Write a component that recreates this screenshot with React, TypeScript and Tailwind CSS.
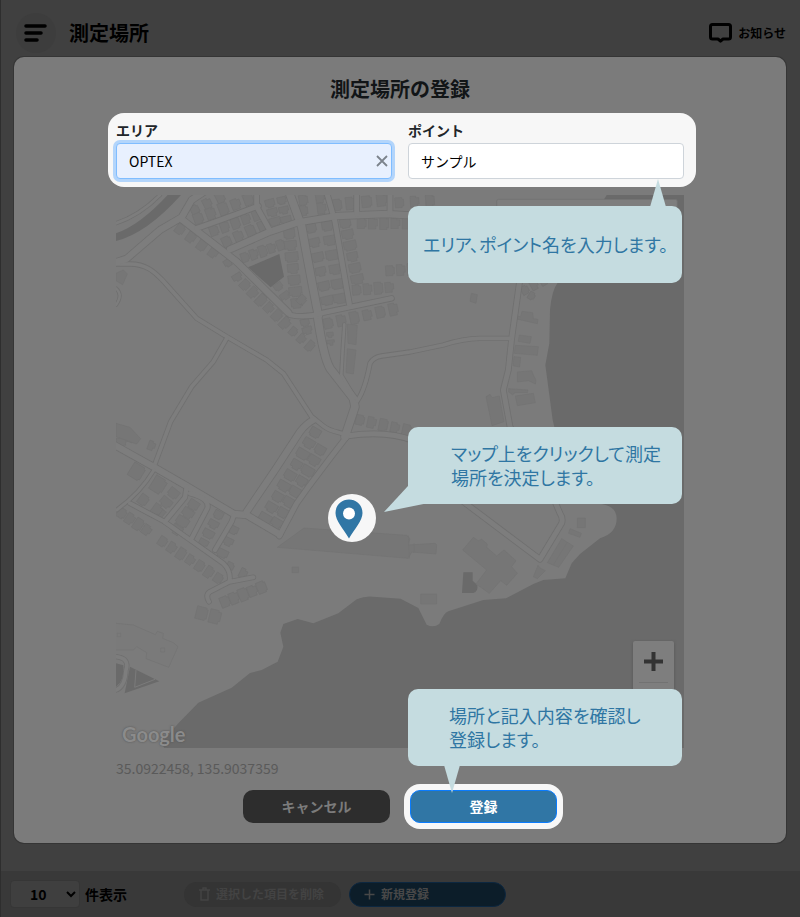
import { useState, type ReactNode } from 'react'

// Map units are a third of a pixel, the map is 1704 x 1659 units
interface Road {
  d: string
  width: number
}

interface HouseRow {
  from: [number, number]
  to: [number, number]
  count: number
  size: number
}

const roads: Road[] = [
  { d: 'M0 222H60C110 222 135 248 155 268L260 385L350 440L470 510L520 550L605 680L640 708C665 728 690 725 710 735', width: 12 },
  { d: 'M350 445L310 515L245 590L182 695L132 830', width: 12 },
  { d: 'M0 758L130 830L230 888L372 972L410 975L508 1033', width: 20 },
  { d: 'M610 690Q590 700 570 725L495 840L410 965', width: 20 },
  { d: 'M508 1038L560 940L590 898L660 805L710 740', width: 16 },
  { d: 'M710 738Q830 720 910 752L980 800L1060 935L1290 1108L1355 1000Q1360 985 1350 970L1335 935L1250 800L1200 710L1180 600L1195 540L1205 445L1235 230', width: 16 },
  { d: 'M705 740L735 650L730 625L660 535Q640 500 622 375', width: 24 },
  { d: 'M625 375Q600 250 575 110L535 0', width: 24 },
  { d: 'M540 375Q590 385 640 368L845 325', width: 15 },
  { d: 'M718 342L675 95L648 0', width: 16 },
  { d: 'M215 88L380 215L535 368', width: 20 },
  { d: 'M0 222L50 206L150 120L215 82L245 30L290 0', width: 20 },
  { d: 'M0 105Q80 85 150 15', width: 9 },
  { d: 'M260 115Q320 95 445 48', width: 16 },
  { d: 'M360 178L480 125L560 98L680 78L830 72L1000 82', width: 20 },
  { d: 'M480 122L440 50V0M740 72V0M840 70V0', width: 16 },
  { d: 'M703 403L698 480L694 555L742 635', width: 9 },
  { d: 'M742 632Q765 600 780 520Q790 502 815 498L900 486L1000 465Q1060 445 1110 445H1200', width: 12 },
  { d: 'M60 940L160 993L340 1120Q365 1145 358 1175L300 1205Q285 1215 297 1235M360 1175L430 1162', width: 13 },
  { d: 'M165 995L225 922L230 890M245 1045L292 955Q300 925 240 910M315 1080L365 995L372 975', width: 14 },
  { d: 'M20 960Q90 910 132 840', width: 10 },
  { d: 'M18 1400Q60 1405 48 1440Q45 1490 18 1500', width: 12 },
  { d: 'M18 295Q40 315 18 345', width: 8 },
]

const houseRows: HouseRow[] = [
  { from: [210, 118], to: [310, 188], count: 4, size: 32 },
  { from: [355, 218], to: [382, 262], count: 2, size: 28 },
  { from: [405, 285], to: [525, 400], count: 6, size: 32 },
  { from: [550, 425], to: [600, 468], count: 3, size: 28 },
  { from: [585, 398], to: [592, 422], count: 2, size: 28 },
  { from: [255, 60], to: [330, 22], count: 3, size: 31 },
  { from: [265, 85], to: [415, 28], count: 5, size: 34 },
  { from: [312, 122], to: [440, 75], count: 5, size: 32 },
  { from: [350, 155], to: [458, 108], count: 4, size: 33 },
  { from: [405, 202], to: [512, 165], count: 5, size: 30 },
  { from: [538, 132], to: [560, 340], count: 7, size: 35 },
  { from: [505, 290], to: [525, 318], count: 2, size: 28 },
  { from: [575, 330], to: [588, 342], count: 1, size: 30 },
  { from: [603, 115], to: [652, 332], count: 6, size: 33 },
  { from: [652, 108], to: [690, 326], count: 6, size: 35 },
  { from: [706, 100], to: [742, 268], count: 6, size: 34 },
  { from: [740, 300], to: [838, 292], count: 4, size: 32 },
  { from: [755, 100], to: [890, 100], count: 5, size: 33 },
  { from: [480, 40], to: [495, 95], count: 3, size: 30 },
  { from: [515, 32], to: [528, 90], count: 3, size: 28 },
  { from: [580, 30], to: [630, 22], count: 2, size: 32 },
  { from: [580, 62], to: [635, 55], count: 2, size: 32 },
  { from: [680, 45], to: [722, 40], count: 2, size: 36 },
  { from: [770, 35], to: [815, 30], count: 2, size: 36 },
  { from: [868, 38], to: [960, 32], count: 3, size: 32 },
  { from: [655, 400], to: [850, 358], count: 6, size: 33 },
  { from: [660, 435], to: [662, 458], count: 2, size: 22 },
  { from: [750, 690], to: [890, 720], count: 5, size: 32 },
  { from: [840, 242], to: [905, 238], count: 3, size: 32 },
  { from: [615, 728], to: [465, 985], count: 9, size: 34 },
  { from: [630, 780], to: [500, 1000], count: 8, size: 34 },
  { from: [65, 745], to: [125, 767], count: 2, size: 27 },
  { from: [80, 845], to: [145, 885], count: 2, size: 46 },
  { from: [190, 910], to: [145, 965], count: 3, size: 34 },
  { from: [100, 930], to: [140, 960], count: 2, size: 34 },
  { from: [250, 945], to: [200, 1020], count: 4, size: 34 },
  { from: [325, 975], to: [280, 1060], count: 4, size: 30 },
  { from: [370, 1020], to: [337, 1090], count: 3, size: 30 },
  { from: [35, 970], to: [110, 1020], count: 4, size: 32 },
  { from: [158, 1055], to: [325, 1165], count: 7, size: 31 },
  { from: [360, 1130], to: [400, 1150], count: 2, size: 28 },
  { from: [345, 1235], to: [455, 1192], count: 5, size: 34 },
  { from: [275, 1270], to: [315, 1280], count: 2, size: 40 },
  { from: [30, 725], to: [35, 755], count: 2, size: 30 },
  { from: [1245, 300], to: [1300, 270], count: 3, size: 28 },
  { from: [1265, 318], to: [1278, 326], count: 1, size: 25 },
]

const buildings = [
  'M712 402L742 406L738 464L714 460Z',
  'M712 476L738 480L730 552L708 548Z',
  'M18 250L40 240L52 252L38 284L18 272Z',
  'M18 700L60 712L92 746L80 762L18 740Z',
  'M1084 310L1102 314L1098 340L1080 334Z',
  'M1218 378L1232 380L1236 364L1268 368L1270 386L1284 388L1282 401L1216 386Z',
  'M1228 435L1264 440L1260 460L1225 454Z',
  'M1216 466L1285 470L1282 496L1213 490Z',
  'M1212 500L1232 502L1229 531L1209 527Z',
  'M1222 546L1265 542L1270 555L1278 570L1276 582L1256 572L1222 576Z',
  'M1196 596L1254 600L1252 608L1215 608L1208 614L1196 606Z',
  'M1216 618L1270 610L1276 638L1222 647Z',
  'M1128 620L1140 613L1146 623L1168 618L1182 695L1146 707Z',
  'M502 1072L582 1014L890 1036L900 1046L895 1065L975 1060L980 1064L978 1092L905 1086L895 1105Z',
  'M895 1036L898 1106M912 1060V1088',
  'M546 1131H566V1148H546Z',
  'M1058 1080L1090 1042L1105 1052L1115 1048L1132 1062L1130 1072L1160 1098L1182 1080L1218 1112L1205 1130L1222 1150L1190 1186L1172 1172L1138 1210L1098 1182L1130 1140Z',
  'M1312 1118L1355 1046L1390 1068L1346 1132ZM1330 1125L1372 1056',
  'M1380 1016L1414 1030L1410 1042L1376 1030Z',
  'M1402 984H1426V1013H1402Z',
  'M1284 1126L1290 1134L1306 1142L1294 1154L1282 1166L1270 1160Z',
  'M932 1212H980V1242H932Z',
]

const school =
  'M18 1300L70 1305L136 1334L142 1324L160 1330L158 1345L190 1358L204 1370L176 1432L108 1406L110 1388L80 1370L70 1380H18M22 1330H32V1340H22ZM152 1374H164V1386H152Z'

function Houses({ from, to, count, size }: HouseRow) {
  const dx = to[0] - from[0]
  const dy = to[1] - from[1]
  const angle = (Math.atan2(dy, dx) * 180) / Math.PI
  return (
    <>
      {Array.from({ length: count }, (_, i) => {
        const t = count > 1 ? i / (count - 1) : 0
        const w = size - 6
        const h = size + (i % 3) * 3 - 2
        const cut = 5 + (i % 2) * 4
        return (
          <path
            key={i}
            transform={`translate(${from[0] + dx * t} ${from[1] + dy * t}) rotate(${angle})`}
            d={`M${-w / 2} ${-h / 2}H${w / 2 - cut}V${-h / 2 + 5}H${w / 2}V${h / 2 - cut}H${w / 2 - 5}V${h / 2}H${-w / 2}Z`}
          />
        )
      })}
    </>
  )
}

function MapDrawing() {
  return (
    <svg className="block w-full h-[553px]" viewBox="18 15 1704 1659" preserveAspectRatio="xMidYMid slice" aria-hidden="true">
      <rect x="18" y="15" width="1704" height="1659" fill="#7b7b7b" />
      <g fill="#6a6a6a">
        {/* Lake */}
        <path d="M1490 15H1722V1674H163L154 1660L205 1600L265 1538L365 1493L420 1449L455 1440L503 1415L520 1370L511 1328L520 1302L563 1287L610 1300L685 1270L740 1228Q765 1217 790 1220L872 1226L925 1254L950 1304Q970 1315 988 1302Q1000 1270 1015 1264L1120 1230L1188 1225L1270 1182L1300 1170L1366 1165L1385 1120L1410 1092L1470 1045Q1520 1030 1520 985Q1520 950 1475 942L1340 740L1328 690L1306 525L1318 460L1320 360Q1325 300 1345 275L1440 100Z" />
        <path d="M18 130Q90 105 173 15H213Q110 130 18 153Z" />
        <path d="M414 232L508 192L522 260L482 292Z" />
        <path d="M1060 1147H1088V1172L1102 1185Q1105 1205 1090 1209H1056Z" />
        <path d="M18 1420L40 1426Q45 1470 18 1490ZM60 1430L148 1474L44 1510Z" />
      </g>
      <path d="M78 1440L74 1492L135 1468" fill="none" stroke="#7b7b7b" strokeWidth="3" />
      <path d={school} fill="#7a7a7a" stroke="#727272" strokeWidth="2" />
      <g fill="#767676" stroke="#727272" strokeWidth="2" strokeLinejoin="round">
        {houseRows.map((row, i) => (
          <Houses key={i} {...row} />
        ))}
        {buildings.map((d) => (
          <path key={d} d={d} />
        ))}
      </g>
      <g fill="none" stroke="#707070" strokeLinecap="round" strokeLinejoin="round">
        {roads.map((road) => (
          <path key={road.d} d={road.d} strokeWidth={road.width + 4} />
        ))}
      </g>
      <g fill="none" stroke="#7d7d7d" strokeLinecap="round" strokeLinejoin="round">
        {roads.map((road) => (
          <path key={road.d} d={road.d} strokeWidth={road.width - 1} />
        ))}
      </g>
      <rect x="1160" y="28" width="542" height="60" rx="6" fill="#7e7e7e" stroke="#707070" strokeWidth="2" />
    </svg>
  )
}

interface CalloutProps {
  children: ReactNode
  className: string
  tail: ReactNode
}

function Callout({ children, className, tail }: CalloutProps) {
  return (
    <div
      className={`absolute z-10 flex h-[77px] w-[274px] items-center rounded-[10px] bg-[#c5dce0] pb-0.5 text-lg leading-6 font-normal text-[#2f76a3] [font-feature-settings:'palt'] ${className}`}
    >
      {tail}
      <p>{children}</p>
    </div>
  )
}

export default function App() {
  const [area, setArea] = useState('OPTEX')
  const [point, setPoint] = useState('サンプル')

  return (
    <div className="flex min-h-screen flex-col border-l border-[#2e2e2e] bg-[#404040] font-['Noto_Sans_CJK_JP',sans-serif] text-black">
      {/* Header */}
      <header className="flex h-[57px] items-center pt-2 pr-3.5 pl-[15px]">
        <button className="flex size-10 items-center justify-center rounded-full bg-[#3d3d3d]" aria-label="メニュー">
          <svg className="h-5 w-6" viewBox="0 0 24 20" stroke="currentColor" strokeWidth="3.500" strokeLinecap="round">
            <path d="M2 3H21M2 10H17M2 17H13" />
          </svg>
        </button>
        <h1 className="ml-[13px] text-xl font-bold">測定場所</h1>
        <button className="ml-auto flex items-center gap-1.5 text-xs font-bold">
          <svg className="h-5 w-[23px]" viewBox="0 0 23 20" fill="none" stroke="currentColor" strokeWidth="3" strokeLinejoin="round">
            <path d="M3.500 1.500H19.500Q21.500 1.500 21.500 3.500V14Q21.500 16 19.500 16H14L11.500 18.200L9 16H3.500Q1.500 16 1.500 14V3.500Q1.500 1.500 3.500 1.500Z" />
          </svg>
          お知らせ
        </button>
      </header>

      {/* Dialog */}
      <section
        role="dialog"
        aria-labelledby="dialog-title"
        className="mr-3.5 ml-[13px] rounded-[10px] bg-[#7b7b7b] px-[102px] pt-4 pb-5 shadow-[0_0_0_1px_#353535]"
      >
        <h2 id="dialog-title" className="text-center text-xl leading-8 font-bold text-[#121517]">
          測定場所の登録
        </h2>

        {/* Fields */}
        <div className="relative mt-2 -mr-3 -ml-2 grid grid-cols-2 gap-4 rounded-2xl bg-[#f7f7f7] py-2 pr-3 pl-2">
          <div>
            <label htmlFor="area" className="block pb-1 text-sm leading-[18px] font-bold text-[#212529]">
              エリア
            </label>
            <div className="relative">
              <input
                id="area"
                value={area}
                onChange={(e) => setArea(e.target.value)}
                className="h-9 w-full rounded border border-[#80bdff] bg-[#e8f0fe] pr-8 pl-3 text-sm text-black outline-none ring-3 ring-[#b3d5fb]"
              />
              <button
                onClick={() => setArea('')}
                aria-label="クリア"
                className="absolute inset-y-0 right-1 flex items-center text-[#7c838c]"
              >
                <svg className="size-3" viewBox="0 0 12 12" stroke="currentColor" strokeWidth="1.800">
                  <path d="M1 1L11 11M11 1L1 11" />
                </svg>
              </button>
            </div>
          </div>
          <div>
            <label htmlFor="point" className="block pb-1 text-sm leading-[18px] font-bold text-[#212529]">
              ポイント
            </label>
            <input
              id="point"
              value={point}
              onChange={(e) => setPoint(e.target.value)}
              className="h-9 w-full rounded border border-[#ced4da] bg-white px-3 text-sm text-black outline-none"
            />
          </div>
          <Callout
            className="top-[93px] right-3.5 pl-[15px]"
            tail={
              <svg className="absolute -top-[27px] right-4 h-7 w-4" viewBox="0 0 16 28" fill="#c5dce0">
                <path d="M8 0L16 28H0Z" />
              </svg>
            }
          >
            エリア、ポイント名を入力します。
          </Callout>
        </div>

        {/* Map */}
        <div className="relative mt-2">
          <MapDrawing />
          <span className="absolute bottom-0 left-1.5 font-['Lato',sans-serif] text-xl leading-7 font-bold text-[#8b8b8b] [text-shadow:0_0_2px_#505050]">
            Google
          </span>
          <div className="absolute top-[299px] left-[212px] flex size-12 items-center justify-center rounded-full bg-[#f7f7f7]">
            <svg className="mt-0.5 mr-1.5 h-10 w-7" viewBox="0 0 28 40">
              <path d="M14 0.500C6.300 0.500 0.500 6.400 0.500 14C0.500 21.500 8 29.500 14 39.500C20 29.500 27.500 21.500 27.500 14C27.500 6.400 21.700 0.500 14 0.500Z" fill="#3076a5" />
              <circle cx="14" cy="14.500" r="6" fill="#fff" />
            </svg>
          </div>
          <div className="absolute right-2.5 bottom-[26px] flex w-[41px] flex-col rounded-xs bg-[#7e7e7e] shadow-[0_1px_3px_#555]">
            <button className="flex h-[41px] items-center justify-center" aria-label="拡大">
              <svg className="size-[19px]" viewBox="0 0 19 19" stroke="#333" strokeWidth="4">
                <path d="M9.500 0V19M0 9.500H19" />
              </svg>
            </button>
            <hr className="mx-1.5 border-[#727272]" />
            <button className="flex h-[39px] items-center justify-center" aria-label="縮小">
              <svg className="size-[19px]" viewBox="0 0 19 19" stroke="#333" strokeWidth="4">
                <path d="M0 9.500H19" />
              </svg>
            </button>
          </div>
          <Callout
            className="top-[232px] right-0.5 pl-[43px]"
            tail={
              <svg className="absolute top-[59px] -left-6 h-[26px] w-[42px]" viewBox="0 0 42 26" fill="#c5dce0">
                <path d="M0 26L24 0L42 17.500Z" />
              </svg>
            }
          >
            マップ上をクリックして測定
            <br />
            場所を決定します。
          </Callout>
          <Callout
            className="-bottom-[18px] right-0.5 pl-[41px]"
            tail={
              <svg className="absolute top-[76px] left-9 h-7 w-4" viewBox="0 0 16 28" fill="#c5dce0">
                <path d="M0 0H16L8 28Z" />
              </svg>
            }
          >
            場所と記入内容を確認し
            <br />
            登録します。
          </Callout>
        </div>

        <p className="mt-2 pb-2.5 text-sm leading-6 text-[#5a5a5a]">35.0922458, 135.9037359</p>

        {/* Actions */}
        <div className="flex justify-center gap-5 text-sm font-bold">
          <button className="h-[33px] w-[147px] rounded-[10px] bg-[#2d2d2d] pb-0.5 text-[#7b7b7b]">キャンセル</button>
          <button className="h-[33px] w-[147px] rounded-[10px] border border-[#0a7cff] bg-[#3076a5] pb-0.5 text-white ring-6 ring-[#f7f7f7]">
            登録
          </button>
        </div>
      </section>

      {/* Footer */}
      <footer className="mt-7 flex flex-1 items-center bg-[#393939] pl-[9px]">
        <label className="flex items-center gap-[5px] text-sm font-bold">
          <span className="relative">
            <select className="h-7 w-[70px] appearance-none rounded border border-[#363636] bg-[#3f3f3f] pl-[19px] text-sm font-bold">
              <option>10</option>
              <option>25</option>
              <option>50</option>
            </select>
            <svg className="pointer-events-none absolute top-2.5 right-1 h-2 w-2.5" viewBox="0 0 10 8" fill="none" stroke="currentColor" strokeWidth="2">
              <path d="M1 2L5 6L9 2" />
            </svg>
          </span>
          件表示
        </label>
        <button className="ml-[57px] flex h-[25px] w-[157px] items-center gap-1.5 rounded-full bg-[#343434] pl-[15px] text-xs font-bold text-[#434343]">
          <svg className="h-3.5 w-[11px]" viewBox="0 0 11 14" fill="none" stroke="currentColor" strokeWidth="1.500">
            <path d="M0 3H11M4 3V1H7V3M2 3V13H9V3" />
          </svg>
          選択した項目を削除
        </button>
        <button className="ml-2 flex h-[25px] w-[157px] items-center gap-1.5 rounded-full border border-[#0c2740] bg-[#0c1d29] pl-3.5 text-xs font-bold text-[#484848]">
          <svg className="size-[11px]" viewBox="0 0 11 11" stroke="currentColor" strokeWidth="1.500">
            <path d="M5.500 0.500V10.500M0.500 5.500H10.500" />
          </svg>
          新規登録
        </button>
      </footer>
    </div>
  )
}
